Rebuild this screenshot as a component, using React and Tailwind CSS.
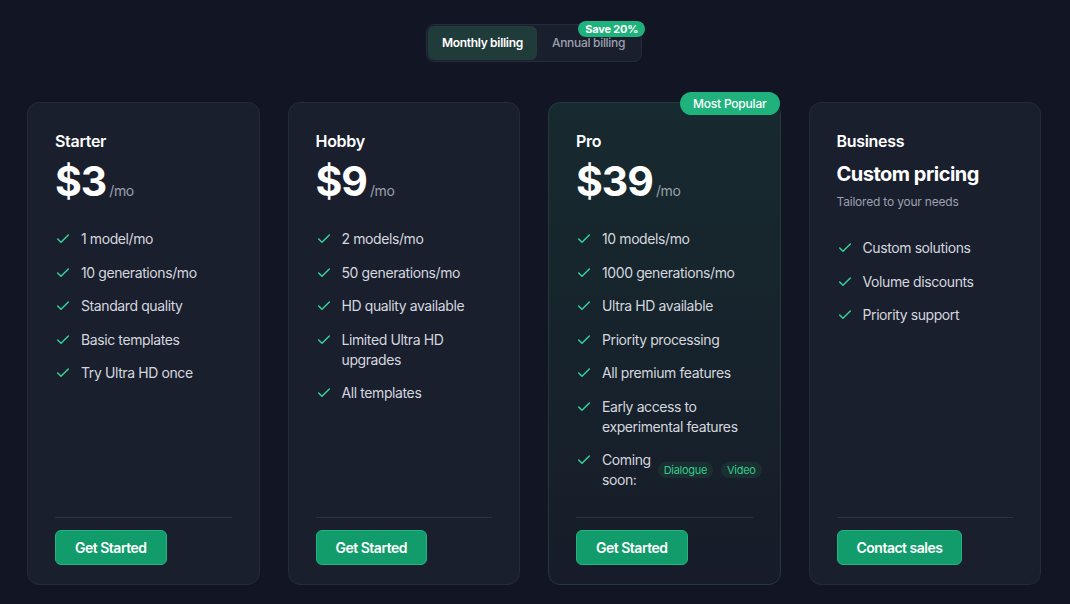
import React, { useState } from 'react';
import { Check } from 'lucide-react';

const planes = [
  {
    nombre: 'Starter',
    precio: '$3',
    features: ['1 model/mo', '10 generations/mo', 'Standard quality', 'Basic templates', 'Try Ultra HD once'],
    boton: 'Get Started',
  },
  {
    nombre: 'Hobby',
    precio: '$9',
    features: ['2 models/mo', '50 generations/mo', 'HD quality available', 'Limited Ultra HD upgrades', 'All templates'],
    boton: 'Get Started',
  },
  {
    nombre: 'Pro',
    precio: '$39',
    popular: true,
    features: [
      '10 models/mo',
      '1000 generations/mo',
      'Ultra HD available',
      'Priority processing',
      'All premium features',
      'Early access to experimental features',
    ],
    proximamente: ['Dialogue', 'Video'],
    boton: 'Get Started',
  },
  {
    nombre: 'Business',
    custom: true,
    features: ['Custom solutions', 'Volume discounts', 'Priority support'],
    boton: 'Contact sales',
  },
];

const Feature = ({ children }) => (
  <li className="flex items-start gap-[10px] text-[14px] leading-5 tracking-[-0.4px] text-[#d4d7de]">
    <Check className="w-4 h-4 mt-[2px] shrink-0 text-[#34d399]" strokeWidth={2.2} />
    {children}
  </li>
);

const Plan = ({ plan }) => {
  return (
    <div
      className={
        plan.popular
          ? 'relative flex flex-col rounded-xl border border-[#23393b] bg-gradient-to-b from-[#172a2f] to-[#161c29] px-[27px] pt-[26px] pb-[19px]'
          : 'relative flex flex-col rounded-xl border border-[#242a3a] bg-[#1a1f2e] px-[27px] pt-[26px] pb-[19px]'
      }
    >
      {plan.popular && (
        <span className="absolute -top-[11px] right-0 rounded-full bg-[#1fb27d] px-[13px] py-[3px] text-[12px] font-medium leading-[17px] tracking-[-0.2px] text-white">
          Most Popular
        </span>
      )}

      <h3 className="text-[16px] font-semibold leading-6 tracking-[-0.3px] text-white">{plan.nombre}</h3>

      {plan.custom ? (
        <div className="mt-[7px]">
          <p className="text-[20px] font-bold leading-7 tracking-[-0.5px] text-white">Custom pricing</p>
          <p className="mt-[6px] text-[12px] leading-4 tracking-[-0.2px] text-[#9aa0ad]">Tailored to your needs</p>
        </div>
      ) : (
        <div className="mt-2 flex items-baseline gap-[3px]">
          <span className="text-[41px] font-bold leading-10 tracking-tight text-white">{plan.precio}</span>
          <span className="text-[14px] tracking-[-0.4px] text-[#9aa0ad]">/mo</span>
        </div>
      )}

      <ul className="mt-7 flex flex-col gap-[13.5px]">
        {plan.features.map((f) => (
          <Feature key={f}>{f}</Feature>
        ))}
        {plan.proximamente && (
          <Feature>
            <div className="flex items-center gap-[7px]">
              <span className="w-min">Coming soon:</span>
              <div className="flex gap-2">
                {plan.proximamente.map((t) => (
                  <span key={t} className="rounded-full bg-[#1a2f2f] px-[6px] py-[1px] text-[11px] leading-[14px] tracking-[-0.3px] text-[#34c98f]">
                    {t}
                  </span>
                ))}
              </div>
            </div>
          </Feature>
        )}
      </ul>

      <div className="mt-auto pt-[27px]">
        <div className="border-t border-[#2c3242] pt-3">
          <button className="rounded-md border border-[#22b581] bg-[#129b6b] px-[19px] py-[6.5px] text-[14px] font-semibold leading-5 tracking-[-0.5px] text-white">
            {plan.boton}
          </button>
        </div>
      </div>
    </div>
  );
};

const App = () => {
  const [anual, setAnual] = useState(false);

  return (
    <div className="min-h-[604px] bg-[#121624] pt-6 pl-[27px] pr-[29px] pb-[18px]" style={{ fontFamily: 'Inter, "Noto Sans", sans-serif' }}>
      <div className="flex justify-center">
        <div className="relative flex rounded-lg border border-[#262c3b] bg-[#1a1f2d] p-px">
          <button
            onClick={() => setAnual(false)}
            className={
              !anual
                ? 'rounded-md bg-[#1f3b3a] px-[14px] py-[9px] text-[12px] font-semibold leading-4 tracking-[-0.3px] text-white'
                : 'rounded-md px-[14px] py-[9px] text-[12px] font-medium leading-4 tracking-[-0.3px] text-[#9aa0ad]'
            }
          >
            Monthly billing
          </button>
          <button
            onClick={() => setAnual(true)}
            className={
              anual
                ? 'rounded-md bg-[#1f3b3a] px-[15px] py-[9px] text-[12px] font-semibold leading-4 tracking-[-0.3px] text-white'
                : 'rounded-md px-[15px] py-[9px] text-[12px] font-medium leading-4 tracking-[-0.3px] text-[#9aa0ad]'
            }
          >
            Annual billing
          </button>
          <span className="absolute -top-[4px] -right-[4px] rounded-full bg-[#1fb27d] px-[7px] text-[11px] font-bold leading-4 tracking-[-0.2px] text-white">
            Save 20%
          </span>
        </div>
      </div>

      <div className="mt-[40px] grid grid-cols-4 gap-7">
        {planes.map((p) => (
          <Plan key={p.nombre} plan={p} />
        ))}
      </div>
    </div>
  );
};

export default App;
